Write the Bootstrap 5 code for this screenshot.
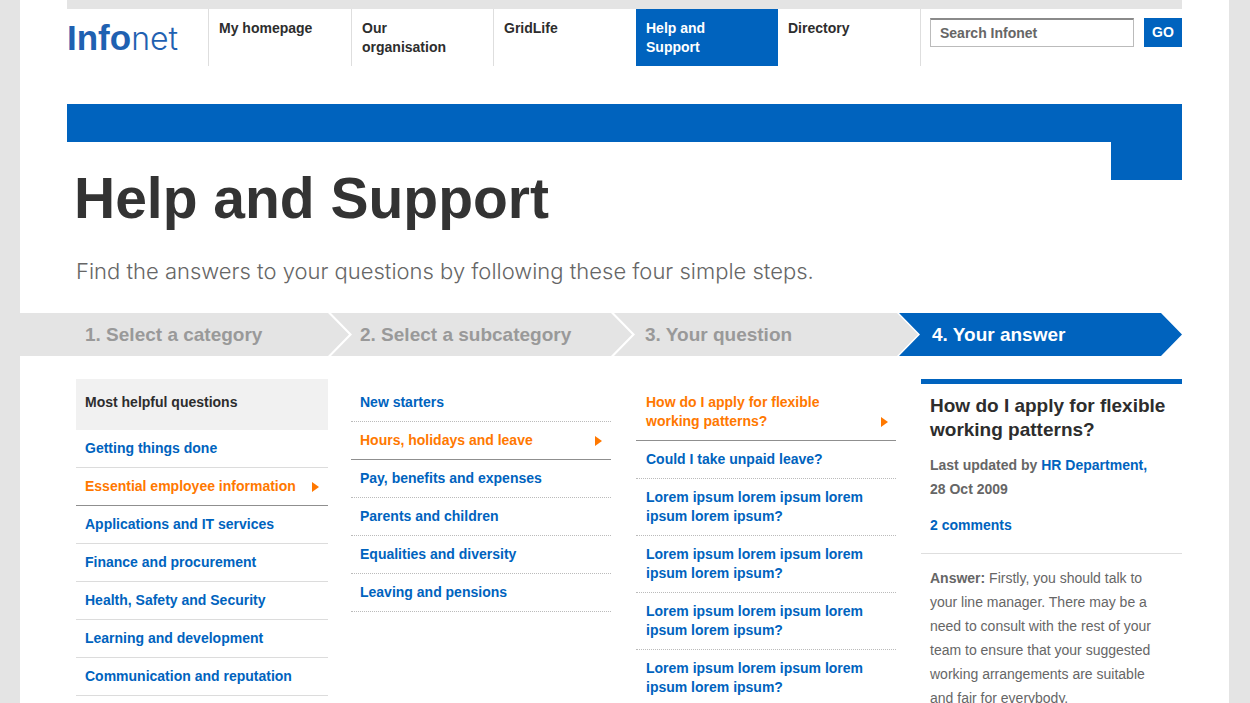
<!DOCTYPE html>
<html lang="en">
<head>
<meta charset="utf-8">
<meta name="viewport" content="width=device-width, initial-scale=1">
<title>Infonet – Help and Support</title>
<link href="https://cdn.jsdelivr.net/npm/bootstrap@5.3.0/dist/css/bootstrap.min.css" rel="stylesheet">
<style>
  :root { --blue: #0063be; --orange: #ff7800; --grey: #e4e4e4; --ink: #2d2d2d; --soft: #666; }
  body { background: var(--grey); color: var(--ink); font: 14px/19px "Liberation Sans", Arial, sans-serif; overflow-x: hidden; }
  a { color: var(--blue); text-decoration: none; }
  a:hover { text-decoration: underline; }
  .sheet { background: #fff; margin: 0 21px 0 20px; min-height: 100vh; }
  .inner { margin: 0 47px; }
  .top-rule { height: 9px; background: var(--grey); }

  .masthead { display: grid; grid-template-columns: 141fr 712fr 262fr; }
  .logo { color: #1f61b1; font-size: 35px; line-height: 58px; height: 57px; font-weight: 700; white-space: nowrap; }
  .logo:hover { text-decoration: none; }
  .logo span { font-family: Inter, "Liberation Sans", sans-serif; font-weight: 300; font-size: 32px; line-height: 1; }
  .main-nav ul { display: grid; grid-template-columns: 143fr 142fr 143fr 142fr 142fr; height: 100%; }
  .main-nav .nav-link { height: 100%; padding: 10px 24px 9px 10px; border-left: 1px solid #dedede; color: var(--ink); font-weight: 700; }
  .main-nav .nav-link.active { background: var(--blue); border-left: 0; color: #fff; }
  .main-nav li:last-child .nav-link { border-left: 0; }
  .search { border-left: 1px solid #dedede; padding: 9px 0 0 9px; gap: 10px; }
  .search .form-control { height: 29px; padding: 0 9px; border: 1px solid #bbb; border-top: 2px solid #8a8a8a; border-radius: 0; font: inherit; font-weight: 700; color: var(--soft); min-width: 0; }
  .search .form-control::placeholder { color: var(--soft); opacity: 1; }
  .search .btn { width: 38px; height: 29px; flex: none; padding: 0; border: 0; border-radius: 0; background: var(--blue); color: #fff; font: inherit; font-weight: 700; }

  .band { margin-top: 38px; height: 38px; background: var(--blue); }
  .band-tab { width: 71px; height: 38px; background: var(--blue); }
  .hero { padding-left: 7px; margin-top: -14px; }
  .hero h1 { font-size: 57px; line-height: 64px; font-weight: 700; color: #333; margin: 0; }
  .hero p { font-family: Inter, "Liberation Sans", sans-serif; font-weight: 300; font-size: 22px; line-height: 30px; color: var(--soft); margin: 26px 0 27px 2px; }

  .steps { display: grid; grid-template-columns: 331fr 283fr 286fr 262fr; margin: 0 47px 23px 0; }
  .step { height: 43px; line-height: 43px; margin: 0 2px 0 -20px; padding-left: 29px; background: var(--grey); color: #999; font-size: 19px; font-weight: 700; white-space: nowrap;
    clip-path: polygon(0 0, calc(100% - 21px) 0, 100% 50%, calc(100% - 21px) 100%, 0 100%, 21px 50%); }
  .step:first-child { margin-left: 0; padding-left: 65px; clip-path: polygon(0 0, calc(100% - 21px) 0, 100% 50%, calc(100% - 21px) 100%, 0 100%); }
  .step:nth-child(3) { padding-left: 31px; }
  .step.current { margin: 0 0 0 -21px; padding-left: 33px; background: var(--blue); color: #fff; }

  .columns { display: grid; grid-template-columns: 284fr 285fr 285fr 261fr; }
  .column { padding-right: 25px; }
  .column.first { padding: 0 23px 0 9px; }
  .column.first h2 { margin: 0; padding: 14px 9px 18px; background: #f1f1f1; font-size: 14px; line-height: 19px; font-weight: 700; }
  .choices a { display: flex; align-items: flex-end; justify-content: space-between; min-height: 38px; padding: 9px; border-bottom: 1px dotted #bbb; font-weight: 700; }
  .choices a.chosen { color: var(--orange); border-bottom: 1px solid #8f8f8f; }
  .choices a.chosen::after { content: ""; flex: none; border: 5px solid transparent; border-left: 7px solid var(--orange); border-right: 0; margin-bottom: 4px; }
  .column.first .choices a { border-bottom: 1px solid #dcdcdc; }
  .column.first .choices a.chosen { border-bottom-color: #8f8f8f; }
  .column:not(.first) .choices { padding-top: 5px; }
  .choices.questions a { padding-right: 8px; padding-left: 10px; }
  .choices.questions span { max-width: 225px; }

  .answer { border-top: 5px solid var(--blue); color: var(--soft); line-height: 24px; }
  .answer h2 { margin: 0 0 11px; padding: 10px 9px 0; font-size: 19px; line-height: 24px; font-weight: 700; color: var(--ink); }
  .answer p { margin: 0; padding: 0 9px; }
  .answer .byline { margin-bottom: 12px; }
  .answer .body-copy { margin-top: 16px; padding: 12px 24px 24px 9px; border-top: 1px solid #dedede; }
</style>
</head>
<body>
<div class="sheet">
  <div class="inner">
    <div class="top-rule"></div>
    <header class="masthead">
      <a class="logo" href="#">Info<span>net</span></a>
      <nav class="main-nav" aria-label="Main">
        <ul class="list-unstyled mb-0">
          <li><a class="nav-link" href="#">My homepage</a></li>
          <li><a class="nav-link" href="#">Our organisation</a></li>
          <li><a class="nav-link" href="#">GridLife</a></li>
          <li><a class="nav-link active" aria-current="page" href="#">Help and Support</a></li>
          <li><a class="nav-link" href="#">Directory</a></li>
        </ul>
      </nav>
      <form class="search d-flex align-items-start" role="search">
        <input class="form-control" id="q" type="text" placeholder="Search Infonet" aria-label="Search Infonet">
        <button class="btn" type="submit">GO</button>
      </form>
    </header>
    <div class="band"></div>
    <div class="band-tab ms-auto"></div>
    <div class="hero">
      <h1>Help and Support</h1>
      <p>Find the answers to your questions by following these four simple steps.</p>
    </div>
  </div>

  <ol class="steps list-unstyled">
    <li class="step">1. Select a category</li>
    <li class="step">2. Select a subcategory</li>
    <li class="step">3. Your question</li>
    <li class="step current" aria-current="step">4. Your answer</li>
  </ol>

  <main class="inner columns">
    <section class="column first">
      <h2>Most helpful questions</h2>
      <ul class="choices list-unstyled mb-0">
        <li><a href="#">Getting things done</a></li>
        <li><a class="chosen" href="#">Essential employee information</a></li>
        <li><a href="#">Applications and IT services</a></li>
        <li><a href="#">Finance and procurement</a></li>
        <li><a href="#">Health, Safety and Security</a></li>
        <li><a href="#">Learning and development</a></li>
        <li><a href="#">Communication and reputation</a></li>
      </ul>
    </section>
    <section class="column">
      <ul class="choices list-unstyled mb-0">
        <li><a href="#">New starters</a></li>
        <li><a class="chosen" href="#">Hours, holidays and leave</a></li>
        <li><a href="#">Pay, benefits and expenses</a></li>
        <li><a href="#">Parents and children</a></li>
        <li><a href="#">Equalities and diversity</a></li>
        <li><a href="#">Leaving and pensions</a></li>
      </ul>
    </section>
    <section class="column">
      <ul class="choices questions list-unstyled mb-0">
        <li><a class="chosen" href="#"><span>How do I apply for flexible working patterns?</span></a></li>
        <li><a href="#"><span>Could I take unpaid leave?</span></a></li>
        <li><a href="#"><span>Lorem ipsum lorem ipsum lorem ipsum lorem ipsum?</span></a></li>
        <li><a href="#"><span>Lorem ipsum lorem ipsum lorem ipsum lorem ipsum?</span></a></li>
        <li><a href="#"><span>Lorem ipsum lorem ipsum lorem ipsum lorem ipsum?</span></a></li>
        <li><a href="#"><span>Lorem ipsum lorem ipsum lorem ipsum lorem ipsum?</span></a></li>
      </ul>
    </section>
    <article class="answer">
      <h2>How do I apply for flexible working patterns?</h2>
      <p class="byline fw-bold">Last updated by <a href="#">HR Department,</a><br>28 Oct 2009</p>
      <p class="fw-bold"><a href="#">2 comments</a></p>
      <p class="body-copy"><strong>Answer:</strong> Firstly, you should talk to your line manager. There may be a need to consult with the rest of your team to ensure that your suggested working arrangements are suitable and fair for everybody.</p>
    </article>
  </main>
</div>
<script src="https://cdn.jsdelivr.net/npm/bootstrap@5.3.0/dist/js/bootstrap.bundle.min.js"></script>
</body>
</html>
